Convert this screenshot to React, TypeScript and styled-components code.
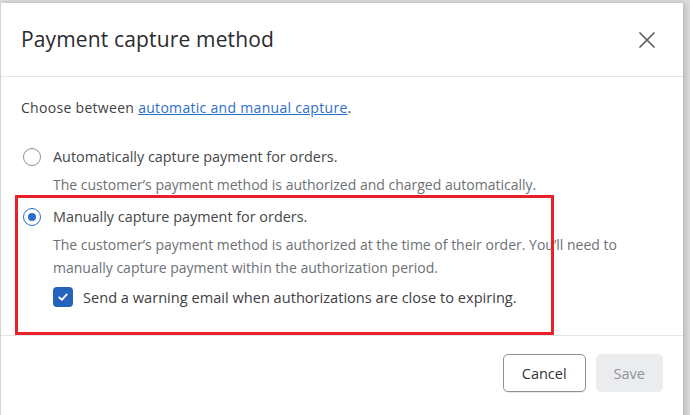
import styled, { createGlobalStyle } from "styled-components";

const GlobalStyle = createGlobalStyle`
    html, body {
        margin: 0;
        padding: 0;
        background: #dcdcdc;
    }
    body {
        font-family: "Open Sans", "Noto Sans", sans-serif;
        -webkit-font-smoothing: antialiased;
    }
`

const Page = styled.div`
    width: 690px;
    height: 415px;
    overflow: hidden;
    padding: 3px 0 0 1px;
    box-sizing: border-box;
`

const Dialog = styled.div`
    width: 682px;
    height: 420px;
    background: #ffffff;
    box-shadow: 2px 0 6px rgba(0, 0, 0, 0.18);
    display: flex;
    flex-direction: column;
`

const Header = styled.div`
    height: 73px;
    padding: 0 20px;
    display: flex;
    align-items: center;
    justify-content: space-between;
    border-bottom: 1px solid #e4e5e7;
`

const Title = styled.h2`
    margin: 0 0 1px 0;
    font-size: 21px;
    font-weight: 400;
    letter-spacing: 0.15px;
    color: #2a2b2e;
`

const CloseButton = styled.button`
    border: 0;
    background: transparent;
    padding: 0;
    width: 24px;
    height: 24px;
    display: flex;
    align-items: center;
    justify-content: center;
    margin-right: 4px;
    cursor: pointer;
`

const Body = styled.div`
    padding: 21px 20px 3px 20px;
    display: flex;
    flex-direction: column;
`

const Intro = styled.p`
    margin: 0 0 29px 0;
    font-size: 14px;
    line-height: 20px;
    letter-spacing: 0.3px;
    color: #3e4144;
`

const Link = styled.a`
    color: #2c6ecb;
    text-decoration: underline;
`

const Option = styled.div<{ $highlight?: boolean }>`
    display: grid;
    grid-template-columns: 32px 1fr;
    position: relative;
    margin-bottom: ${p => p.$highlight ? 0 : 11}px;
    padding-bottom: ${p => p.$highlight ? 22 : 0}px;

    ${p => p.$highlight && `
        &::after {
            content: "";
            position: absolute;
            left: -6px;
            top: -12px;
            width: 533px;
            bottom: -6px;
            border: 3px solid #e8202a;
            pointer-events: none;
        }
    `}
`

const Radio = styled.span<{ $checked?: boolean }>`
    width: 18px;
    height: 18px;
    box-sizing: border-box;
    margin: 1px 0 0 2px;
    border-radius: 50%;
    border: ${p => p.$checked ? "1.5px solid #2c6ecb" : "1.5px solid #8c9196"};
    display: flex;
    align-items: center;
    justify-content: center;

    &::before {
        content: "";
        width: 8px;
        height: 8px;
        border-radius: 50%;
        background: ${p => p.$checked ? "#2c6ecb" : "transparent"};
    }
`

const OptionText = styled.div`
    display: flex;
    flex-direction: column;
`

const Label = styled.div`
    font-size: 14.4px;
    line-height: 20px;
    color: #44474a;
`

const Help = styled.div`
    margin-top: 6px;
    font-size: 14px;
    line-height: 23px;
    color: #6d7175;
`

const CheckRow = styled.div`
    display: flex;
    align-items: center;
    gap: 10px;
    margin-top: 8px;
`

const Checkbox = styled.span`
    width: 20px;
    height: 20px;
    border-radius: 4px;
    background: #2463bc;
    display: flex;
    align-items: center;
    justify-content: center;
`

const CheckLabel = styled.span`
    font-size: 14.6px;
    line-height: 20px;
    color: #3e4144;
`

const Footer = styled.div`
    margin-top: 3px;
    border-top: 1px solid #e4e5e7;
    padding: 18px 20px;
    display: flex;
    justify-content: flex-end;
    gap: 10px;
`

const Button = styled.button<{ $disabled?: boolean }>`
    height: 38px;
    padding: 0 ${p => p.$disabled ? 17 : 18}px;
    border-radius: 5px;
    font-family: inherit;
    font-size: 14.5px;
    border: ${p => p.$disabled ? "1px solid #ebecee" : "1px solid #8c9196"};
    background: ${p => p.$disabled ? "#ebecee" : "#ffffff"};
    color: ${p => p.$disabled ? "#8f949a" : "#303235"};
    box-shadow: ${p => p.$disabled ? "none" : "0 1px 0 rgba(0,0,0,0.08)"};
`

export default function App() {
    return (
        <>
            <GlobalStyle/>
            <Page>
                <Dialog>
                    <Header>
                        <Title>Payment capture method</Title>
                        <CloseButton aria-label="Close">
                            <svg width="18" height="18" viewBox="0 0 18 18">
                                <path d="M2 2 L16 16 M16 2 L2 16" stroke="#5c5f62" strokeWidth="1.7" strokeLinecap="round"/>
                            </svg>
                        </CloseButton>
                    </Header>

                    <Body>
                        <Intro>
                            Choose between <Link href="#">automatic and manual capture</Link>.
                        </Intro>

                        <Option>
                            <Radio/>
                            <OptionText>
                                <Label>Automatically capture payment for orders.</Label>
                                <Help>The customer’s payment method is authorized and charged automatically.</Help>
                            </OptionText>
                        </Option>

                        <Option $highlight>
                            <Radio $checked/>
                            <OptionText>
                                <Label>Manually capture payment for orders.</Label>
                                <Help>
                                    The customer’s payment method is authorized at the time of their order. You’ll need to<br/>
                                    manually capture payment within the authorization period.
                                </Help>
                                <CheckRow>
                                    <Checkbox>
                                        <svg width="12" height="12" viewBox="0 0 12 12">
                                            <path d="M2.2 6.3 L4.8 8.8 L9.8 3.4" fill="none" stroke="#ffffff" strokeWidth="1.8" strokeLinecap="round" strokeLinejoin="round"/>
                                        </svg>
                                    </Checkbox>
                                    <CheckLabel>Send a warning email when authorizations are close to expiring.</CheckLabel>
                                </CheckRow>
                            </OptionText>
                        </Option>
                    </Body>

                    <Footer>
                        <Button>Cancel</Button>
                        <Button $disabled>Save</Button>
                    </Footer>
                </Dialog>
            </Page>
        </>
    )
}
